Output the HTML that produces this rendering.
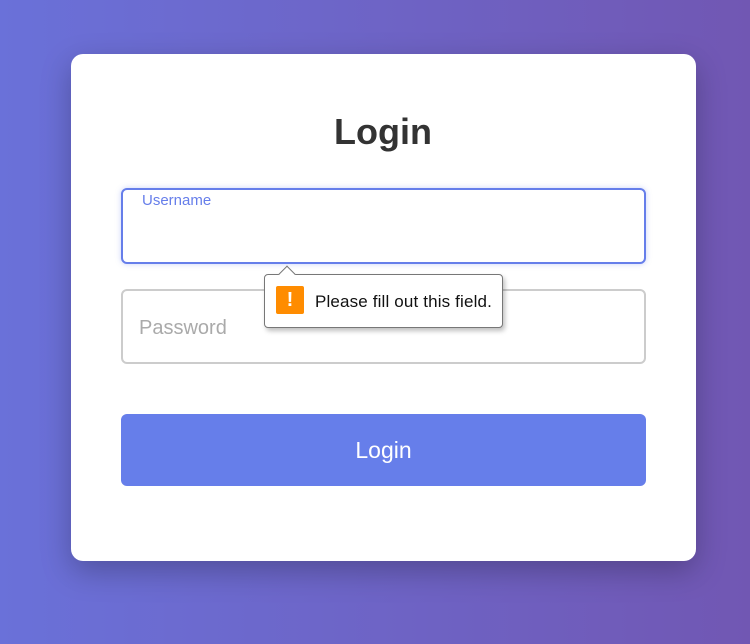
<!DOCTYPE html>
<html><head><style>
html,body{margin:0;width:750px;height:644px;overflow:hidden}
body{background:linear-gradient(90deg,#6a71d9 0%,#7157b3 100%);font-family:"Liberation Sans",sans-serif;position:relative}
.card{position:absolute;left:71px;top:54px;width:625px;height:507px;background:#fff;border-radius:12px;box-shadow:0 10px 30px rgba(0,0,0,.25)}
h1{position:absolute;top:110px;left:0;width:766px;margin:0;text-align:center;font-size:36px;font-weight:bold;color:#333;line-height:44px}
.in{position:absolute;left:121px;width:521px;border:2px solid #ccc;border-radius:6px;background:#fff}
.u{top:188px;height:72px;border-color:#667eea;box-shadow:0 0 6px rgba(102,126,234,.35)}
.u span{position:absolute;left:19px;top:2px;font-size:15px;color:#667eea}
.p{top:289px;height:71px}
.p span{position:absolute;left:16px;top:26px;font-size:20px;color:#aaa}
.btn{position:absolute;left:121px;top:414px;width:525px;height:72px;background:#667eea;border-radius:6px;color:#fff;font-size:23px;text-align:center;line-height:72px}
.tip{position:absolute;left:264px;top:274px;width:237px;height:52px;background:#fff;border:1px solid #777;border-radius:4px;box-shadow:2px 3px 5px rgba(0,0,0,.25)}
.tip:before{content:"";position:absolute;left:16px;top:-7px;width:11px;height:11px;background:#fff;border-left:1px solid #777;border-top:1px solid #777;transform:rotate(45deg)}
.ic{position:absolute;left:11px;top:11px;width:28px;height:28px;background:#ff8c00;border-radius:2px;color:#fff;font-weight:bold;text-align:center;font-size:20px;line-height:28px}
.tt{position:absolute;left:50px;top:17px;font-size:17px;color:#111;letter-spacing:0.15px}
</style></head><body>
<div class="card"></div>
<h1>Login</h1>
<div class="in u"><span>Username</span></div>
<div class="in p"><span>Password</span></div>
<div class="btn">Login</div>
<div class="tip"><div class="ic">!</div><div class="tt">Please fill out this field.</div></div>
</body></html>
